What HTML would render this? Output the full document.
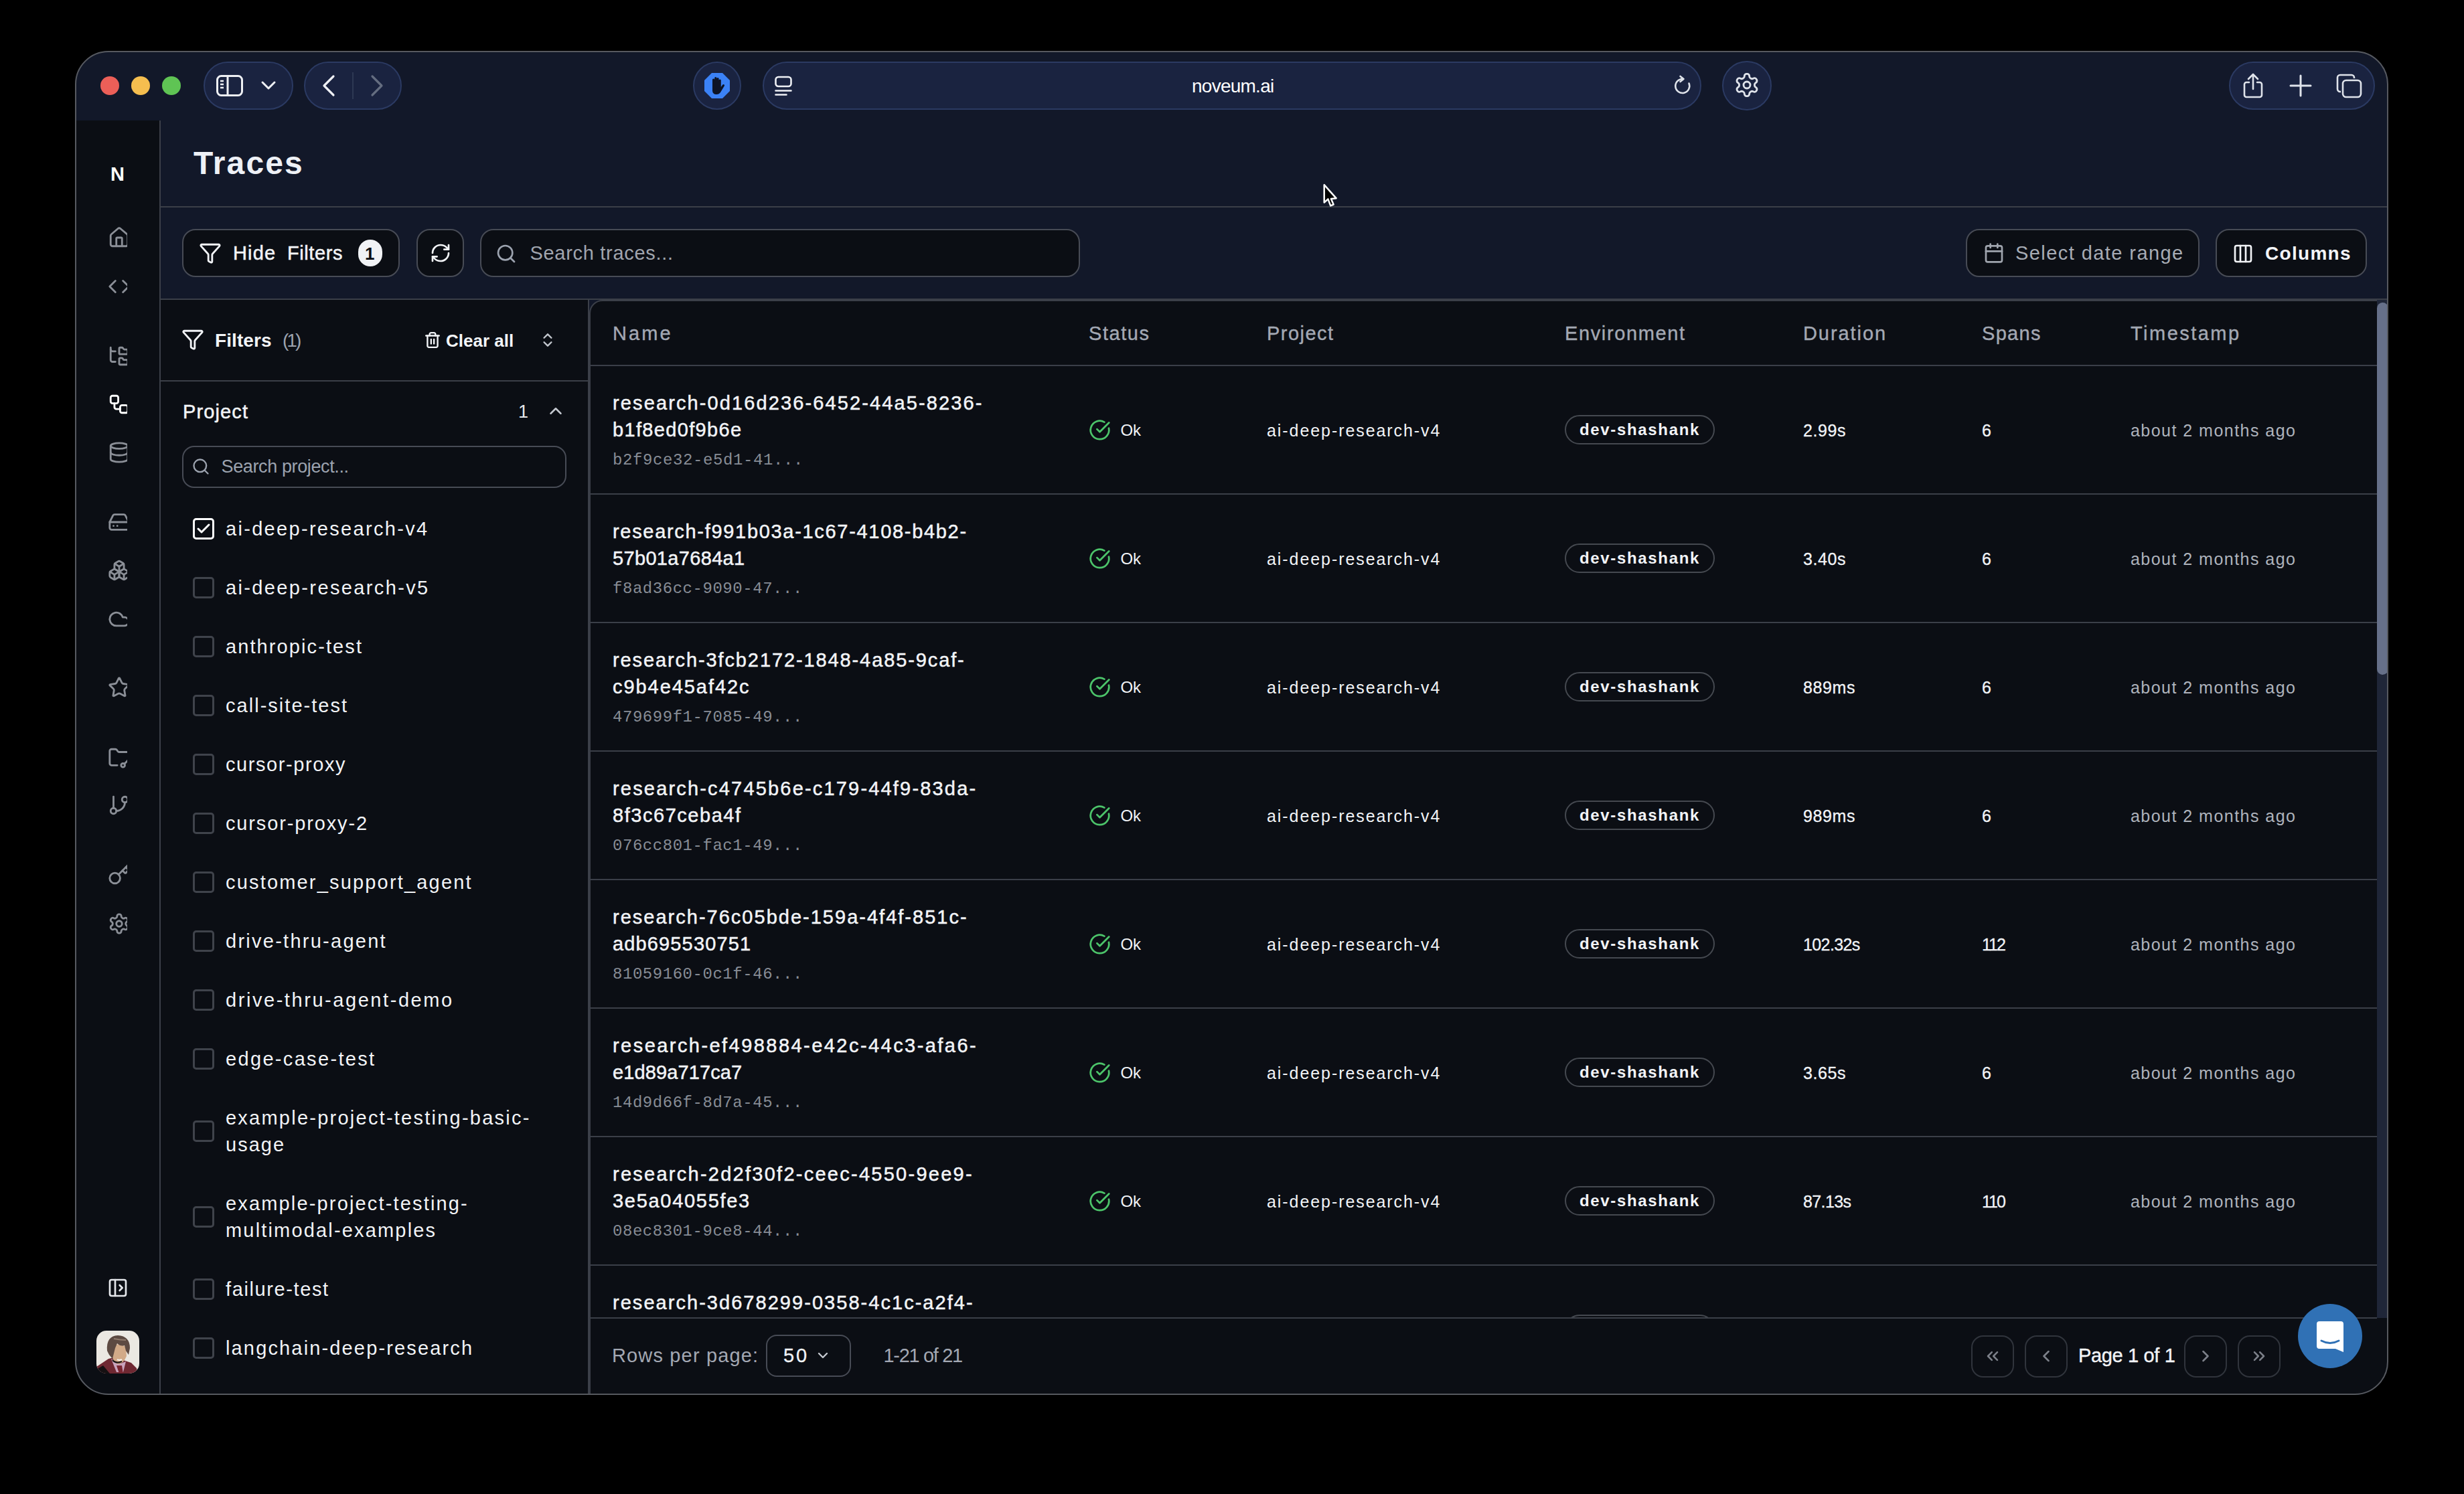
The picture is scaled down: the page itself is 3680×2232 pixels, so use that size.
<!DOCTYPE html>
<html><head><meta charset="utf-8">
<style>
*{box-sizing:border-box;margin:0;padding:0}
html,body{width:3680px;height:2232px;background:#000;overflow:hidden}
body{font-family:"Liberation Sans",sans-serif;color:#f2f4f7;position:relative}
.a{position:absolute}
#win{position:absolute;left:112px;top:76px;width:3455px;height:2008px;border-radius:50px;overflow:hidden;background:#121829}
#wb{position:absolute;left:112px;top:76px;width:3455px;height:2008px;border-radius:50px;border:2px solid #56595f;pointer-events:none}
#o{position:absolute;left:-112px;top:-76px;width:3680px;height:2232px}
.pill{position:absolute;background:#1a2340;border:2px solid #2b3a62;border-radius:40px}
.btn{position:absolute;background:#0b0e14;border:2px solid #474b55;border-radius:20px}
.t{position:absolute;white-space:nowrap;line-height:1}
.clip{position:absolute;overflow:hidden}
svg{position:absolute;overflow:visible}
</style></head><body>
<div id="win"><div id="o">

<div class="a" style="left:150px;top:114px;width:28px;height:28px;border-radius:50%;background:#ec5f58"></div>
<div class="a" style="left:196px;top:114px;width:28px;height:28px;border-radius:50%;background:#f5be4f"></div>
<div class="a" style="left:242px;top:114px;width:28px;height:28px;border-radius:50%;background:#5fc454"></div>
<div class="pill" style="left:304px;top:92px;width:134px;height:72px"></div>
<div class="pill" style="left:454px;top:92px;width:146px;height:72px"></div>
<div class="pill" style="left:1035px;top:92px;width:72px;height:72px;border-radius:50%"></div>
<div class="pill" style="left:1139px;top:92px;width:1402px;height:72px"></div>
<div class="pill" style="left:2572px;top:91px;width:74px;height:74px;border-radius:50%"></div>
<div class="pill" style="left:3329px;top:92px;width:218px;height:72px"></div>
<svg style="left:322px;top:111px" width="42" height="34" viewBox="0 0 42 34" fill="none" stroke="#eef0f4" stroke-width="3"><rect x="2.5" y="2.5" width="37" height="29" rx="6"/><path d="M18 3v28"/><path d="M7 10h5M7 15h5M7 20h5" stroke-width="2.5"/></svg>
<svg style="left:390px;top:121px" width="22" height="14" viewBox="0 0 22 14" fill="none" stroke="#eef0f4" stroke-width="3" stroke-linecap="round" stroke-linejoin="round"><path d="M2 2l9 9 9-9"/></svg>
<svg style="left:480px;top:112px" width="22" height="32" viewBox="0 0 22 32" fill="none" stroke="#eef0f4" stroke-width="3.2" stroke-linecap="round" stroke-linejoin="round"><path d="M18 2L4 16l14 14"/></svg>
<div class="a" style="left:526px;top:108px;width:2px;height:40px;background:#2d3853"></div>
<svg style="left:552px;top:112px" width="22" height="32" viewBox="0 0 22 32" fill="none" stroke="#646d80" stroke-width="3.2" stroke-linecap="round" stroke-linejoin="round"><path d="M4 2l14 14L4 30"/></svg>
<svg style="left:1052px;top:109px" width="38" height="38" viewBox="0 0 38 38"><polygon points="11,0 27,0 38,11 38,27 27,38 11,38 0,27 0,11" fill="#3b82f6"/><path d="M12 20 V10 a1.6 1.6 0 0 1 3.2 0 V18 V7.5 a1.6 1.6 0 0 1 3.2 0 V18 V8.5 a1.6 1.6 0 0 1 3.2 0 V18 V11 a1.6 1.6 0 0 1 3.2 0 V21 l2.5-3.5 a1.6 1.6 0 0 1 2.6 1.8 L24 29 a7 7 0 0 1-6 3 h-0.5 a5.5 5.5 0 0 1-5.5-5.5z" fill="#0d1426"/></svg>
<svg style="left:1156px;top:113px" width="28" height="32" viewBox="0 0 28 32" fill="none" stroke="#eef0f4" stroke-width="2.6" stroke-linecap="round"><rect x="2.5" y="2" width="23" height="14" rx="4"/><path d="M2.5 22.5h23M2.5 28.5h16"/></svg>
<div class="t" style="left:1780px;top:114.6px;font-size:28px;font-weight:normal;color:#ffffff;letter-spacing:-0.75px;font-family:'Liberation Sans';">noveum.ai</div>
<svg style="left:2499px;top:112px" width="30" height="32" viewBox="0 0 30 32" fill="none" stroke="#dfe3ea" stroke-width="2.6" stroke-linecap="round" stroke-linejoin="round"><path d="M23.5 12.5 A10.5 10.5 0 1 1 14.5 6"/><path d="M10.5 2l5 4-5 4"/></svg>
<svg style="left:2589.0px;top:107.0px" width="40" height="40" viewBox="0 0 24 24" fill="none" stroke="#dfe3ea" stroke-width="1.7" stroke-linecap="round" stroke-linejoin="round"><path d="M12.22 2h-.44a2 2 0 0 0-2 2v.18a2 2 0 0 1-1 1.73l-.43.25a2 2 0 0 1-2 0l-.15-.08a2 2 0 0 0-2.73.73l-.22.38a2 2 0 0 0 .73 2.73l.15.1a2 2 0 0 1 1 1.72v.51a2 2 0 0 1-1 1.74l-.15.09a2 2 0 0 0-.73 2.73l.22.38a2 2 0 0 0 2.73.73l.15-.08a2 2 0 0 1 2 0l.43.25a2 2 0 0 1 1 1.73V20a2 2 0 0 0 2 2h.44a2 2 0 0 0 2-2v-.18a2 2 0 0 1 1-1.73l.43-.25a2 2 0 0 1 2 0l.15.08a2 2 0 0 0 2.73-.73l.22-.39a2 2 0 0 0-.73-2.73l-.15-.08a2 2 0 0 1-1-1.74v-.5a2 2 0 0 1 1-1.74l.15-.09a2 2 0 0 0 .73-2.73l-.22-.38a2 2 0 0 0-2.73-.73l-.15.08a2 2 0 0 1-2 0l-.43-.25a2 2 0 0 1-1-1.73V4a2 2 0 0 0-2-2z"/><circle cx="12" cy="12" r="3"/></svg>
<svg style="left:3347px;top:108px" width="36" height="40" viewBox="0 0 36 40" fill="none" stroke="#dfe3ea" stroke-width="2.6" stroke-linecap="round" stroke-linejoin="round"><path d="M18 3v22M11 10l7-7 7 7"/><path d="M12 15H8a3 3 0 0 0-3 3v16a3 3 0 0 0 3 3h20a3 3 0 0 0 3-3V18a3 3 0 0 0-3-3h-4"/></svg>
<svg style="left:3419px;top:111px" width="34" height="34" viewBox="0 0 34 34" fill="none" stroke="#dfe3ea" stroke-width="3" stroke-linecap="round"><path d="M17 2v30M2 17h30"/></svg>
<svg style="left:3489px;top:110px" width="40" height="38" viewBox="0 0 40 38" fill="none" stroke="#dfe3ea" stroke-width="2.6" stroke-linejoin="round"><rect x="10" y="10" width="27" height="25" rx="5"/><path d="M7 27H6a4 4 0 0 1-4-4V6a4 4 0 0 1 4-4h17a4 4 0 0 1 4 4v1"/></svg>
<div class="a" style="left:112px;top:180px;width:128px;height:1910px;background:#0b0e14;border-right:2px solid #3b3f48"></div>
<div class="t" style="left:165px;top:246.1px;font-size:29px;font-weight:bold;color:#ffffff;letter-spacing:0.00px;font-family:'Liberation Sans';">N</div>
<div class="clip" style="left:113px;top:300px;width:77px;height:1150px">
<div class="a" style="left:-113px;top:-300px;width:400px;height:1500px">
<svg style="left:161.0px;top:338.0px" width="34" height="34" viewBox="0 0 24 24" fill="none" stroke="#8b8f97" stroke-width="2" stroke-linecap="round" stroke-linejoin="round"><path d="M15 21v-8a1 1 0 0 0-1-1h-4a1 1 0 0 0-1 1v8"/><path d="M3 10a2 2 0 0 1 .709-1.528l7-5.999a2 2 0 0 1 2.582 0l7 5.999A2 2 0 0 1 21 10v9a2 2 0 0 1-2 2H5a2 2 0 0 1-2-2z"/></svg>
<svg style="left:161.0px;top:411.0px" width="34" height="34" viewBox="0 0 24 24" fill="none" stroke="#8b8f97" stroke-width="2" stroke-linecap="round" stroke-linejoin="round"><path d="m16 18 6-6-6-6"/><path d="m8 6-6 6 6 6"/></svg>
<svg style="left:161.0px;top:515.0px" width="34" height="34" viewBox="0 0 24 24" fill="none" stroke="#8b8f97" stroke-width="2" stroke-linecap="round" stroke-linejoin="round"><path d="M20 10a1 1 0 0 0 1-1V6a1 1 0 0 0-1-1h-2.5a1 1 0 0 1-.8-.4l-.9-1.2A1 1 0 0 0 15 3h-2a1 1 0 0 0-1 1v5a1 1 0 0 0 1 1Z"/><path d="M20 21a1 1 0 0 0 1-1v-3a1 1 0 0 0-1-1h-2.9a1 1 0 0 1-.88-.55l-.42-.85a1 1 0 0 0-.92-.6H13a1 1 0 0 0-1 1v5a1 1 0 0 0 1 1Z"/><path d="M3 5a2 2 0 0 0 2 2h3"/><path d="M3 3v13a2 2 0 0 0 2 2h3"/></svg>
<svg style="left:161.0px;top:587.0px" width="34" height="34" viewBox="0 0 24 24" fill="none" stroke="#ffffff" stroke-width="2" stroke-linecap="round" stroke-linejoin="round"><rect width="8" height="8" x="3" y="3" rx="2"/><path d="M7 11v4a2 2 0 0 0 2 2h4"/><rect width="8" height="8" x="13" y="13" rx="2"/></svg>
<svg style="left:161.0px;top:658.5px" width="34" height="34" viewBox="0 0 24 24" fill="none" stroke="#8b8f97" stroke-width="2" stroke-linecap="round" stroke-linejoin="round"><ellipse cx="12" cy="5" rx="9" ry="3"/><path d="M3 5V19A9 3 0 0 0 21 19V5"/><path d="M3 12A9 3 0 0 0 21 12"/></svg>
<svg style="left:161.0px;top:763.0px" width="34" height="34" viewBox="0 0 24 24" fill="none" stroke="#8b8f97" stroke-width="2" stroke-linecap="round" stroke-linejoin="round"><line x1="22" x2="2" y1="12" y2="12"/><path d="M5.45 5.11 2 12v6a2 2 0 0 0 2 2h16a2 2 0 0 0 2-2v-6l-3.45-6.89A2 2 0 0 0 16.76 4H7.24a2 2 0 0 0-1.79 1.11z"/><line x1="6" x2="6.01" y1="16" y2="16"/><line x1="10" x2="10.01" y1="16" y2="16"/></svg>
<svg style="left:161.0px;top:834.5px" width="34" height="34" viewBox="0 0 24 24" fill="none" stroke="#8b8f97" stroke-width="2" stroke-linecap="round" stroke-linejoin="round"><path d="M2.97 12.92A2 2 0 0 0 2 14.63v3.24a2 2 0 0 0 .97 1.71l3 1.8a2 2 0 0 0 2.06 0L12 19v-5.5l-5-3-4.03 2.42Z"/><path d="m7 16.5-4.74-2.85"/><path d="m7 16.5 5-3"/><path d="M7 16.5v5.17"/><path d="M12 13.5V19l3.97 2.38a2 2 0 0 0 2.06 0l3-1.8a2 2 0 0 0 .97-1.71v-3.24a2 2 0 0 0-.97-1.71L17 10.5l-5 3Z"/><path d="m17 16.5-5-3"/><path d="m17 16.5 4.74-2.85"/><path d="M17 16.5v5.17"/><path d="M7.97 4.42A2 2 0 0 0 7 6.13v4.37l5 3 5-3V6.13a2 2 0 0 0-.97-1.71l-3-1.8a2 2 0 0 0-2.06 0l-3 1.8Z"/><path d="M12 8 7.26 5.15"/><path d="m12 8 4.74-2.85"/><path d="M12 13.5V8"/></svg>
<svg style="left:161.0px;top:908.0px" width="34" height="34" viewBox="0 0 24 24" fill="none" stroke="#8b8f97" stroke-width="2" stroke-linecap="round" stroke-linejoin="round"><path d="M17.5 19H9a7 7 0 1 1 6.71-9h1.79a4.5 4.5 0 1 1 0 9Z"/></svg>
<svg style="left:161.0px;top:1010.0px" width="34" height="34" viewBox="0 0 24 24" fill="none" stroke="#8b8f97" stroke-width="2" stroke-linecap="round" stroke-linejoin="round"><path d="M11.525 2.295a.53.53 0 0 1 .95 0l2.31 4.679a2.123 2.123 0 0 0 1.595 1.16l5.166.756a.53.53 0 0 1 .294.904l-3.736 3.638a2.123 2.123 0 0 0-.611 1.878l.882 5.14a.53.53 0 0 1-.771.56l-4.618-2.428a2.122 2.122 0 0 0-1.973 0L6.396 21.01a.53.53 0 0 1-.77-.56l.881-5.139a2.122 2.122 0 0 0-.611-1.879L2.16 9.795a.53.53 0 0 1 .294-.906l5.165-.755a2.122 2.122 0 0 0 1.597-1.16z"/></svg>
<svg style="left:161.0px;top:1115.0px" width="34" height="34" viewBox="0 0 24 24" fill="none" stroke="#8b8f97" stroke-width="2" stroke-linecap="round" stroke-linejoin="round"><circle cx="16" cy="20" r="2"/><path d="M10 20H4a2 2 0 0 1-2-2V5a2 2 0 0 1 2-2h3.9a2 2 0 0 1 1.69.9l.81 1.2a2 2 0 0 0 1.67.9H20a2 2 0 0 1 2 2v2"/><path d="m22 14-4.5 4.5"/><path d="m21 15 1 1"/></svg>
<svg style="left:161.0px;top:1186.0px" width="34" height="34" viewBox="0 0 24 24" fill="none" stroke="#8b8f97" stroke-width="2" stroke-linecap="round" stroke-linejoin="round"><line x1="6" x2="6" y1="3" y2="15"/><circle cx="18" cy="6" r="3"/><circle cx="6" cy="18" r="3"/><path d="M18 9a9 9 0 0 1-9 9"/></svg>
<svg style="left:161.0px;top:1290.0px" width="34" height="34" viewBox="0 0 24 24" fill="none" stroke="#8b8f97" stroke-width="2" stroke-linecap="round" stroke-linejoin="round"><path d="m15.5 7.5 2.3 2.3a1 1 0 0 0 1.4 0l2.1-2.1a1 1 0 0 0 0-1.4L19 4"/><path d="m21 2-9.6 9.6"/><circle cx="7.5" cy="15.5" r="5.5"/></svg>
<svg style="left:161.0px;top:1363.0px" width="34" height="34" viewBox="0 0 24 24" fill="none" stroke="#8b8f97" stroke-width="2" stroke-linecap="round" stroke-linejoin="round"><path d="M12.22 2h-.44a2 2 0 0 0-2 2v.18a2 2 0 0 1-1 1.73l-.43.25a2 2 0 0 1-2 0l-.15-.08a2 2 0 0 0-2.73.73l-.22.38a2 2 0 0 0 .73 2.73l.15.1a2 2 0 0 1 1 1.72v.51a2 2 0 0 1-1 1.74l-.15.09a2 2 0 0 0-.73 2.73l.22.38a2 2 0 0 0 2.73.73l.15-.08a2 2 0 0 1 2 0l.43.25a2 2 0 0 1 1 1.73V20a2 2 0 0 0 2 2h.44a2 2 0 0 0 2-2v-.18a2 2 0 0 1 1-1.73l.43-.25a2 2 0 0 1 2 0l.15.08a2 2 0 0 0 2.73-.73l.22-.39a2 2 0 0 0-.73-2.73l-.15-.08a2 2 0 0 1-1-1.74v-.5a2 2 0 0 1 1-1.74l.15-.09a2 2 0 0 0 .73-2.73l-.22-.38a2 2 0 0 0-2.73-.73l-.15.08a2 2 0 0 1-2 0l-.43-.25a2 2 0 0 1-1-1.73V4a2 2 0 0 0-2-2z"/><circle cx="12" cy="12" r="3"/></svg>
</div></div>
<svg style="left:160.0px;top:1908.0px" width="32" height="32" viewBox="0 0 24 24" fill="none" stroke="#e5e7eb" stroke-width="2" stroke-linecap="round" stroke-linejoin="round"><rect width="18" height="18" x="3" y="3" rx="2"/><path d="M9 3v18"/><path d="m14 9 3 3-3 3"/></svg>
<svg style="left:144px;top:1988px" width="64" height="64" viewBox="0 0 64 64"><defs><clipPath id="av"><rect width="64" height="64" rx="15"/></clipPath></defs><g clip-path="url(#av)"><rect width="64" height="64" fill="#ebe8e2"/><path d="M0 64 L0 54 L18 42 L26 40 L40 44 L52 48 L60 56 L62 64z" fill="#6f2832"/><path d="M0 64 L0 58 L10 52 L20 64z" fill="#151012"/><path d="M22 42 L30 62 L40 62 L44 46 L34 50z" fill="#c9a3bc"/><path d="M30 52 L34 64 L40 64 L38 52z" fill="#7a2632"/><path d="M24 22 Q34 18 44 24 L45 38 Q40 50 32 50 Q26 48 24 40z" fill="#d2aa88"/><path d="M24 44 Q30 50 38 46" stroke="#1a1414" stroke-width="2.2" fill="none"/><path d="M31 43 q4 2 7 0" stroke="#f5f0ea" stroke-width="2.4" fill="none"/><path d="M16 30 Q14 8 32 7 Q50 8 50 26 L48 36 L44 30 L42 22 Q36 24 31 19 L28 26 L26 34 L24 42 L19 36z" fill="#5d4a42"/><path d="M26 12 Q36 14 44 14" stroke="#8f7a6c" stroke-width="2" fill="none"/></g></svg>
<div class="t" style="left:289px;top:220.4px;font-size:48px;font-weight:bold;color:#eef1f6;letter-spacing:2.11px;font-family:'Liberation Sans';">Traces</div>
<div class="a" style="left:240px;top:308px;width:3328px;height:2px;background:#3b3f48"></div>
<div class="btn" style="left:272px;top:342px;width:325px;height:72px"></div>
<svg style="left:297.0px;top:361.0px" width="34" height="34" viewBox="0 0 24 24" fill="none" stroke="#f2f4f7" stroke-width="2" stroke-linecap="round" stroke-linejoin="round"><path d="M10 20a1 1 0 0 0 .553.895l2 1A1 1 0 0 0 14 21v-7a2 2 0 0 1 .517-1.341L21.74 4.67A1 1 0 0 0 21 3H3a1 1 0 0 0-.742 1.67l7.225 7.989A2 2 0 0 1 10 14z"/></svg>
<div class="t" style="left:348px;top:363.5px;font-size:29px;font-weight:normal;color:#f2f4f7;letter-spacing:1.16px;font-family:'Liberation Sans';-webkit-text-stroke:0.5px #f2f4f7;">Hide</div>
<div class="t" style="left:429px;top:363.5px;font-size:29px;font-weight:normal;color:#f2f4f7;letter-spacing:0.59px;font-family:'Liberation Sans';-webkit-text-stroke:0.5px #f2f4f7;">Filters</div>
<div class="a" style="left:535px;top:358px;width:36px;height:40px;border-radius:20px;background:#f1f3f6"></div>
<div class="t" style="left:545px;top:366.0px;font-size:26px;font-weight:bold;color:#0b0e14;letter-spacing:0.00px;font-family:'Liberation Sans';">1</div>
<div class="btn" style="left:622px;top:342px;width:71px;height:72px"></div>
<svg style="left:641.5px;top:362.0px" width="32" height="32" viewBox="0 0 24 24" fill="none" stroke="#f2f4f7" stroke-width="2" stroke-linecap="round" stroke-linejoin="round"><path d="M3 12a9 9 0 0 1 9-9 9.75 9.75 0 0 1 6.74 2.74L21 8"/><path d="M21 3v5h-5"/><path d="M21 12a9 9 0 0 1-9 9 9.75 9.75 0 0 1-6.74-2.74L3 16"/><path d="M8 16H3v5"/></svg>
<div class="btn" style="left:717px;top:342px;width:896px;height:72px"></div>
<svg style="left:740.0px;top:363.0px" width="32" height="32" viewBox="0 0 24 24" fill="none" stroke="#9ca3af" stroke-width="2" stroke-linecap="round" stroke-linejoin="round"><circle cx="11" cy="11" r="8"/><path d="m21 21-4.3-4.3"/></svg>
<div class="t" style="left:791.5px;top:363.5px;font-size:29px;font-weight:normal;color:#a0a5ae;letter-spacing:0.70px;font-family:'Liberation Sans';">Search traces...</div>
<div class="btn" style="left:2936px;top:342px;width:349px;height:72px"></div>
<svg style="left:2962.0px;top:362.0px" width="32" height="32" viewBox="0 0 24 24" fill="none" stroke="#a0a5ae" stroke-width="2" stroke-linecap="round" stroke-linejoin="round"><path d="M8 2v4"/><path d="M16 2v4"/><rect width="18" height="18" x="3" y="4" rx="2"/><path d="M3 10h18"/></svg>
<div class="t" style="left:3010px;top:364.1px;font-size:29px;font-weight:normal;color:#a7acb5;letter-spacing:1.43px;font-family:'Liberation Sans';">Select date range</div>
<div class="btn" style="left:3309px;top:342px;width:226px;height:72px"></div>
<svg style="left:3334.0px;top:362.5px" width="32" height="32" viewBox="0 0 24 24" fill="none" stroke="#f2f4f7" stroke-width="2" stroke-linecap="round" stroke-linejoin="round"><rect width="18" height="18" x="3" y="3" rx="2"/><path d="M9 3v18"/><path d="M15 3v18"/></svg>
<div class="t" style="left:3383px;top:364.9px;font-size:28px;font-weight:bold;color:#f2f4f7;letter-spacing:1.30px;font-family:'Liberation Sans';">Columns</div>
<div class="a" style="left:240px;top:446px;width:3328px;height:2px;background:#3b3f48"></div>
<div class="a" style="left:240px;top:448px;width:640px;height:1640px;background:#0b0e14;border-right:2px solid #3b3f48"></div>
<svg style="left:271.0px;top:490.0px" width="34" height="34" viewBox="0 0 24 24" fill="none" stroke="#f2f4f7" stroke-width="2" stroke-linecap="round" stroke-linejoin="round"><path d="M10 20a1 1 0 0 0 .553.895l2 1A1 1 0 0 0 14 21v-7a2 2 0 0 1 .517-1.341L21.74 4.67A1 1 0 0 0 21 3H3a1 1 0 0 0-.742 1.67l7.225 7.989A2 2 0 0 1 10 14z"/></svg>
<div class="t" style="left:321px;top:494.9px;font-size:28px;font-weight:bold;color:#f2f4f7;letter-spacing:0.09px;font-family:'Liberation Sans';">Filters</div>
<div class="t" style="left:422px;top:494.9px;font-size:28px;font-weight:normal;color:#9ca3af;letter-spacing:-2.95px;font-family:'Liberation Sans';">(1)</div>
<svg style="left:633.0px;top:495.0px" width="26" height="26" viewBox="0 0 24 24" fill="none" stroke="#f2f4f7" stroke-width="2.2" stroke-linecap="round" stroke-linejoin="round"><path d="M3 6h18"/><path d="M19 6v14c0 1-1 2-2 2H7c-1 0-2-1-2-2V6"/><path d="M8 6V4c0-1 1-2 2-2h4c1 0 2 1 2 2v2"/><line x1="10" x2="10" y1="11" y2="17"/><line x1="14" x2="14" y1="11" y2="17"/></svg>
<div class="t" style="left:666px;top:496.0px;font-size:26px;font-weight:bold;color:#f2f4f7;letter-spacing:0.01px;font-family:'Liberation Sans';">Clear all</div>
<svg style="left:804.5px;top:494.5px" width="26" height="26" viewBox="0 0 24 24" fill="none" stroke="#c4c8cf" stroke-width="2.2" stroke-linecap="round" stroke-linejoin="round"><path d="m7 15 5 5 5-5"/><path d="m7 9 5-5 5 5"/></svg>
<div class="a" style="left:240px;top:568px;width:638px;height:2px;background:#3b3f48"></div>
<div class="t" style="left:273px;top:600.5px;font-size:29px;font-weight:normal;color:#f2f4f7;letter-spacing:1.13px;font-family:'Liberation Sans';-webkit-text-stroke:0.5px #f2f4f7;">Project</div>
<div class="t" style="left:774px;top:602.1px;font-size:27px;font-weight:normal;color:#e5e7eb;letter-spacing:0.00px;font-family:'Liberation Sans';">1</div>
<svg style="left:815.0px;top:599.0px" width="30" height="30" viewBox="0 0 24 24" fill="none" stroke="#c4c8cf" stroke-width="2" stroke-linecap="round" stroke-linejoin="round"><path d="m18 15-6-6-6 6"/></svg>
<div class="a" style="left:272px;top:666px;width:574px;height:63px;border:2px solid #474b55;border-radius:18px"></div>
<svg style="left:286.0px;top:683.0px" width="28" height="28" viewBox="0 0 24 24" fill="none" stroke="#9ca3af" stroke-width="2" stroke-linecap="round" stroke-linejoin="round"><circle cx="11" cy="11" r="8"/><path d="m21 21-4.3-4.3"/></svg>
<div class="t" style="left:330.5px;top:684.1px;font-size:27px;font-weight:normal;color:#9ca3af;letter-spacing:-0.38px;font-family:'Liberation Sans';">Search project...</div>
<div class="a" style="left:288px;top:774px;width:32px;height:32px;border:3px solid #ffffff;border-radius:5px"></div>
<svg style="left:292.0px;top:778.0px" width="24" height="24" viewBox="0 0 24 24" fill="none" stroke="#ffffff" stroke-width="3" stroke-linecap="round" stroke-linejoin="round"><path d="M20 6 9 17l-5-5"/></svg>
<div class="t" style="left:337px;top:775.5px;font-size:29px;font-weight:normal;color:#f2f4f7;letter-spacing:2.31px;font-family:'Liberation Sans';">ai-deep-research-v4</div>
<div class="a" style="left:288px;top:862px;width:32px;height:32px;border:3px solid #3f434b;border-radius:5px"></div>
<div class="t" style="left:337px;top:863.5px;font-size:29px;font-weight:normal;color:#f2f4f7;letter-spacing:2.37px;font-family:'Liberation Sans';">ai-deep-research-v5</div>
<div class="a" style="left:288px;top:950px;width:32px;height:32px;border:3px solid #3f434b;border-radius:5px"></div>
<div class="t" style="left:337px;top:951.5px;font-size:29px;font-weight:normal;color:#f2f4f7;letter-spacing:2.10px;font-family:'Liberation Sans';">anthropic-test</div>
<div class="a" style="left:288px;top:1038px;width:32px;height:32px;border:3px solid #3f434b;border-radius:5px"></div>
<div class="t" style="left:337px;top:1039.5px;font-size:29px;font-weight:normal;color:#f2f4f7;letter-spacing:2.03px;font-family:'Liberation Sans';">call-site-test</div>
<div class="a" style="left:288px;top:1126px;width:32px;height:32px;border:3px solid #3f434b;border-radius:5px"></div>
<div class="t" style="left:337px;top:1127.5px;font-size:29px;font-weight:normal;color:#f2f4f7;letter-spacing:1.58px;font-family:'Liberation Sans';">cursor-proxy</div>
<div class="a" style="left:288px;top:1214px;width:32px;height:32px;border:3px solid #3f434b;border-radius:5px"></div>
<div class="t" style="left:337px;top:1215.5px;font-size:29px;font-weight:normal;color:#f2f4f7;letter-spacing:1.86px;font-family:'Liberation Sans';">cursor-proxy-2</div>
<div class="a" style="left:288px;top:1302px;width:32px;height:32px;border:3px solid #3f434b;border-radius:5px"></div>
<div class="t" style="left:337px;top:1303.5px;font-size:29px;font-weight:normal;color:#f2f4f7;letter-spacing:2.18px;font-family:'Liberation Sans';">customer_support_agent</div>
<div class="a" style="left:288px;top:1390px;width:32px;height:32px;border:3px solid #3f434b;border-radius:5px"></div>
<div class="t" style="left:337px;top:1391.5px;font-size:29px;font-weight:normal;color:#f2f4f7;letter-spacing:2.26px;font-family:'Liberation Sans';">drive-thru-agent</div>
<div class="a" style="left:288px;top:1478px;width:32px;height:32px;border:3px solid #3f434b;border-radius:5px"></div>
<div class="t" style="left:337px;top:1479.5px;font-size:29px;font-weight:normal;color:#f2f4f7;letter-spacing:2.56px;font-family:'Liberation Sans';">drive-thru-agent-demo</div>
<div class="a" style="left:288px;top:1566px;width:32px;height:32px;border:3px solid #3f434b;border-radius:5px"></div>
<div class="t" style="left:337px;top:1567.5px;font-size:29px;font-weight:normal;color:#f2f4f7;letter-spacing:2.33px;font-family:'Liberation Sans';">edge-case-test</div>
<div class="a" style="left:288px;top:1674px;width:32px;height:32px;border:3px solid #3f434b;border-radius:5px"></div>
<div class="t" style="left:337px;top:1655.5px;font-size:29px;font-weight:normal;color:#f2f4f7;letter-spacing:2.24px;font-family:'Liberation Sans';">example-project-testing-basic-</div>
<div class="t" style="left:337px;top:1695.5px;font-size:29px;font-weight:normal;color:#f2f4f7;letter-spacing:2.03px;font-family:'Liberation Sans';">usage</div>
<div class="a" style="left:288px;top:1802px;width:32px;height:32px;border:3px solid #3f434b;border-radius:5px"></div>
<div class="t" style="left:337px;top:1783.5px;font-size:29px;font-weight:normal;color:#f2f4f7;letter-spacing:2.16px;font-family:'Liberation Sans';">example-project-testing-</div>
<div class="t" style="left:337px;top:1823.5px;font-size:29px;font-weight:normal;color:#f2f4f7;letter-spacing:2.17px;font-family:'Liberation Sans';">multimodal-examples</div>
<div class="a" style="left:288px;top:1910px;width:32px;height:32px;border:3px solid #3f434b;border-radius:5px"></div>
<div class="t" style="left:337px;top:1911.5px;font-size:29px;font-weight:normal;color:#f2f4f7;letter-spacing:1.61px;font-family:'Liberation Sans';">failure-test</div>
<div class="a" style="left:288px;top:1998px;width:32px;height:32px;border:3px solid #3f434b;border-radius:5px"></div>
<div class="t" style="left:337px;top:1999.5px;font-size:29px;font-weight:normal;color:#f2f4f7;letter-spacing:2.15px;font-family:'Liberation Sans';">langchain-deep-research</div>
<div class="a" style="left:880px;top:448px;width:2700px;height:1650px;background:#0b0e14;border:2px solid #3b3f48;border-radius:20px 0 0 0"></div>
<div class="t" style="left:915px;top:483.8px;font-size:29px;font-weight:normal;color:#a3a8b3;letter-spacing:3.12px;font-family:'Liberation Sans';-webkit-text-stroke:0.4px #a3a8b3;">Name</div>
<div class="t" style="left:1626px;top:483.8px;font-size:29px;font-weight:normal;color:#a3a8b3;letter-spacing:1.56px;font-family:'Liberation Sans';-webkit-text-stroke:0.4px #a3a8b3;">Status</div>
<div class="t" style="left:1892px;top:483.8px;font-size:29px;font-weight:normal;color:#a3a8b3;letter-spacing:1.47px;font-family:'Liberation Sans';-webkit-text-stroke:0.4px #a3a8b3;">Project</div>
<div class="t" style="left:2337px;top:483.8px;font-size:29px;font-weight:normal;color:#a3a8b3;letter-spacing:1.63px;font-family:'Liberation Sans';-webkit-text-stroke:0.4px #a3a8b3;">Environment</div>
<div class="t" style="left:2693px;top:483.8px;font-size:29px;font-weight:normal;color:#a3a8b3;letter-spacing:1.93px;font-family:'Liberation Sans';-webkit-text-stroke:0.4px #a3a8b3;">Duration</div>
<div class="t" style="left:2960px;top:483.8px;font-size:29px;font-weight:normal;color:#a3a8b3;letter-spacing:1.32px;font-family:'Liberation Sans';-webkit-text-stroke:0.4px #a3a8b3;">Spans</div>
<div class="t" style="left:3182px;top:483.8px;font-size:29px;font-weight:normal;color:#a3a8b3;letter-spacing:2.47px;font-family:'Liberation Sans';-webkit-text-stroke:0.4px #a3a8b3;">Timestamp</div>
<div class="a" style="left:882px;top:545px;width:2668px;height:2px;background:#3b3f48"></div>
<div class="clip" style="left:882px;top:547px;width:2668px;height:1422px">
<div class="a" style="left:-882px;top:-547px;width:3680px;height:2232px">
<div class="t" style="left:915px;top:587.5px;font-size:29px;font-weight:normal;color:#f2f4f7;letter-spacing:2.12px;font-family:'Liberation Sans';-webkit-text-stroke:0.5px #f2f4f7;">research-0d16d236-6452-44a5-8236-</div>
<div class="t" style="left:915px;top:627.5px;font-size:29px;font-weight:normal;color:#f2f4f7;letter-spacing:1.34px;font-family:'Liberation Sans';-webkit-text-stroke:0.5px #f2f4f7;">b1f8ed0f9b6e</div>
<div class="t" style="left:915px;top:675.6px;font-size:24px;font-weight:normal;color:#878c95;letter-spacing:0.60px;font-family:'Liberation Mono';">b2f9ce32-e5d1-41...</div>
<svg style="left:1625.5px;top:625.5px" width="33" height="33" viewBox="0 0 24 24" fill="none" stroke="#4cc46a" stroke-width="2" stroke-linecap="round" stroke-linejoin="round"><path d="M21.801 10A10 10 0 1 1 17 3.335"/><path d="m9 11 3 3L22 4"/></svg>
<div class="t" style="left:1673.5px;top:630.7px;font-size:24px;font-weight:normal;color:#f2f4f7;letter-spacing:-0.17px;font-family:'Liberation Sans';">Ok</div>
<div class="t" style="left:1892px;top:630.8px;font-size:25px;font-weight:normal;color:#f2f4f7;letter-spacing:1.93px;font-family:'Liberation Sans';">ai-deep-research-v4</div>
<div class="t" style="left:2693px;top:630.8px;font-size:25px;font-weight:normal;color:#f2f4f7;letter-spacing:0.60px;font-family:'Liberation Sans';-webkit-text-stroke:0.3px #f2f4f7;">2.99s</div>
<div class="t" style="left:2960px;top:630.8px;font-size:25px;font-weight:normal;color:#f2f4f7;letter-spacing:-2.00px;font-family:'Liberation Sans';-webkit-text-stroke:0.3px #f2f4f7;">6</div>
<div class="t" style="left:3182px;top:630.8px;font-size:25px;font-weight:normal;color:#aeb3bc;letter-spacing:1.47px;font-family:'Liberation Sans';">about 2 months ago</div>
<div class="a" style="left:2337px;top:620px;width:224px;height:44px;border:2px solid #454950;border-radius:22px"></div>
<div class="t" style="left:2359px;top:630.2px;font-size:24px;font-weight:bold;color:#f2f4f7;letter-spacing:1.66px;font-family:'Liberation Sans';">dev-shashank</div>
<div class="a" style="left:882px;top:737px;width:2668px;height:2px;background:#3b3f48"></div>
<div class="t" style="left:915px;top:779.5px;font-size:29px;font-weight:normal;color:#f2f4f7;letter-spacing:1.69px;font-family:'Liberation Sans';-webkit-text-stroke:0.5px #f2f4f7;">research-f991b03a-1c67-4108-b4b2-</div>
<div class="t" style="left:915px;top:819.5px;font-size:29px;font-weight:normal;color:#f2f4f7;letter-spacing:0.33px;font-family:'Liberation Sans';-webkit-text-stroke:0.5px #f2f4f7;">57b01a7684a1</div>
<div class="t" style="left:915px;top:867.6px;font-size:24px;font-weight:normal;color:#878c95;letter-spacing:0.54px;font-family:'Liberation Mono';">f8ad36cc-9090-47...</div>
<svg style="left:1625.5px;top:817.5px" width="33" height="33" viewBox="0 0 24 24" fill="none" stroke="#4cc46a" stroke-width="2" stroke-linecap="round" stroke-linejoin="round"><path d="M21.801 10A10 10 0 1 1 17 3.335"/><path d="m9 11 3 3L22 4"/></svg>
<div class="t" style="left:1673.5px;top:822.7px;font-size:24px;font-weight:normal;color:#f2f4f7;letter-spacing:-0.17px;font-family:'Liberation Sans';">Ok</div>
<div class="t" style="left:1892px;top:822.8px;font-size:25px;font-weight:normal;color:#f2f4f7;letter-spacing:1.93px;font-family:'Liberation Sans';">ai-deep-research-v4</div>
<div class="t" style="left:2693px;top:822.8px;font-size:25px;font-weight:normal;color:#f2f4f7;letter-spacing:0.60px;font-family:'Liberation Sans';-webkit-text-stroke:0.3px #f2f4f7;">3.40s</div>
<div class="t" style="left:2960px;top:822.8px;font-size:25px;font-weight:normal;color:#f2f4f7;letter-spacing:-2.00px;font-family:'Liberation Sans';-webkit-text-stroke:0.3px #f2f4f7;">6</div>
<div class="t" style="left:3182px;top:822.8px;font-size:25px;font-weight:normal;color:#aeb3bc;letter-spacing:1.47px;font-family:'Liberation Sans';">about 2 months ago</div>
<div class="a" style="left:2337px;top:812px;width:224px;height:44px;border:2px solid #454950;border-radius:22px"></div>
<div class="t" style="left:2359px;top:822.2px;font-size:24px;font-weight:bold;color:#f2f4f7;letter-spacing:1.66px;font-family:'Liberation Sans';">dev-shashank</div>
<div class="a" style="left:882px;top:929px;width:2668px;height:2px;background:#3b3f48"></div>
<div class="t" style="left:915px;top:971.5px;font-size:29px;font-weight:normal;color:#f2f4f7;letter-spacing:1.89px;font-family:'Liberation Sans';-webkit-text-stroke:0.5px #f2f4f7;">research-3fcb2172-1848-4a85-9caf-</div>
<div class="t" style="left:915px;top:1011.5px;font-size:29px;font-weight:normal;color:#f2f4f7;letter-spacing:1.94px;font-family:'Liberation Sans';-webkit-text-stroke:0.5px #f2f4f7;">c9b4e45af42c</div>
<div class="t" style="left:915px;top:1059.6px;font-size:24px;font-weight:normal;color:#878c95;letter-spacing:0.54px;font-family:'Liberation Mono';">479699f1-7085-49...</div>
<svg style="left:1625.5px;top:1009.5px" width="33" height="33" viewBox="0 0 24 24" fill="none" stroke="#4cc46a" stroke-width="2" stroke-linecap="round" stroke-linejoin="round"><path d="M21.801 10A10 10 0 1 1 17 3.335"/><path d="m9 11 3 3L22 4"/></svg>
<div class="t" style="left:1673.5px;top:1014.7px;font-size:24px;font-weight:normal;color:#f2f4f7;letter-spacing:-0.17px;font-family:'Liberation Sans';">Ok</div>
<div class="t" style="left:1892px;top:1014.8px;font-size:25px;font-weight:normal;color:#f2f4f7;letter-spacing:1.93px;font-family:'Liberation Sans';">ai-deep-research-v4</div>
<div class="t" style="left:2693px;top:1014.8px;font-size:25px;font-weight:normal;color:#f2f4f7;letter-spacing:0.60px;font-family:'Liberation Sans';-webkit-text-stroke:0.3px #f2f4f7;">889ms</div>
<div class="t" style="left:2960px;top:1014.8px;font-size:25px;font-weight:normal;color:#f2f4f7;letter-spacing:-2.00px;font-family:'Liberation Sans';-webkit-text-stroke:0.3px #f2f4f7;">6</div>
<div class="t" style="left:3182px;top:1014.8px;font-size:25px;font-weight:normal;color:#aeb3bc;letter-spacing:1.47px;font-family:'Liberation Sans';">about 2 months ago</div>
<div class="a" style="left:2337px;top:1004px;width:224px;height:44px;border:2px solid #454950;border-radius:22px"></div>
<div class="t" style="left:2359px;top:1014.2px;font-size:24px;font-weight:bold;color:#f2f4f7;letter-spacing:1.66px;font-family:'Liberation Sans';">dev-shashank</div>
<div class="a" style="left:882px;top:1121px;width:2668px;height:2px;background:#3b3f48"></div>
<div class="t" style="left:915px;top:1163.5px;font-size:29px;font-weight:normal;color:#f2f4f7;letter-spacing:2.18px;font-family:'Liberation Sans';-webkit-text-stroke:0.5px #f2f4f7;">research-c4745b6e-c179-44f9-83da-</div>
<div class="t" style="left:915px;top:1203.5px;font-size:29px;font-weight:normal;color:#f2f4f7;letter-spacing:1.54px;font-family:'Liberation Sans';-webkit-text-stroke:0.5px #f2f4f7;">8f3c67ceba4f</div>
<div class="t" style="left:915px;top:1251.6px;font-size:24px;font-weight:normal;color:#878c95;letter-spacing:0.54px;font-family:'Liberation Mono';">076cc801-fac1-49...</div>
<svg style="left:1625.5px;top:1201.5px" width="33" height="33" viewBox="0 0 24 24" fill="none" stroke="#4cc46a" stroke-width="2" stroke-linecap="round" stroke-linejoin="round"><path d="M21.801 10A10 10 0 1 1 17 3.335"/><path d="m9 11 3 3L22 4"/></svg>
<div class="t" style="left:1673.5px;top:1206.7px;font-size:24px;font-weight:normal;color:#f2f4f7;letter-spacing:-0.17px;font-family:'Liberation Sans';">Ok</div>
<div class="t" style="left:1892px;top:1206.8px;font-size:25px;font-weight:normal;color:#f2f4f7;letter-spacing:1.93px;font-family:'Liberation Sans';">ai-deep-research-v4</div>
<div class="t" style="left:2693px;top:1206.8px;font-size:25px;font-weight:normal;color:#f2f4f7;letter-spacing:0.60px;font-family:'Liberation Sans';-webkit-text-stroke:0.3px #f2f4f7;">989ms</div>
<div class="t" style="left:2960px;top:1206.8px;font-size:25px;font-weight:normal;color:#f2f4f7;letter-spacing:-2.00px;font-family:'Liberation Sans';-webkit-text-stroke:0.3px #f2f4f7;">6</div>
<div class="t" style="left:3182px;top:1206.8px;font-size:25px;font-weight:normal;color:#aeb3bc;letter-spacing:1.47px;font-family:'Liberation Sans';">about 2 months ago</div>
<div class="a" style="left:2337px;top:1196px;width:224px;height:44px;border:2px solid #454950;border-radius:22px"></div>
<div class="t" style="left:2359px;top:1206.2px;font-size:24px;font-weight:bold;color:#f2f4f7;letter-spacing:1.66px;font-family:'Liberation Sans';">dev-shashank</div>
<div class="a" style="left:882px;top:1313px;width:2668px;height:2px;background:#3b3f48"></div>
<div class="t" style="left:915px;top:1355.5px;font-size:29px;font-weight:normal;color:#f2f4f7;letter-spacing:2.01px;font-family:'Liberation Sans';-webkit-text-stroke:0.5px #f2f4f7;">research-76c05bde-159a-4f4f-851c-</div>
<div class="t" style="left:915px;top:1395.5px;font-size:29px;font-weight:normal;color:#f2f4f7;letter-spacing:1.14px;font-family:'Liberation Sans';-webkit-text-stroke:0.5px #f2f4f7;">adb695530751</div>
<div class="t" style="left:915px;top:1443.6px;font-size:24px;font-weight:normal;color:#878c95;letter-spacing:0.54px;font-family:'Liberation Mono';">81059160-0c1f-46...</div>
<svg style="left:1625.5px;top:1393.5px" width="33" height="33" viewBox="0 0 24 24" fill="none" stroke="#4cc46a" stroke-width="2" stroke-linecap="round" stroke-linejoin="round"><path d="M21.801 10A10 10 0 1 1 17 3.335"/><path d="m9 11 3 3L22 4"/></svg>
<div class="t" style="left:1673.5px;top:1398.7px;font-size:24px;font-weight:normal;color:#f2f4f7;letter-spacing:-0.17px;font-family:'Liberation Sans';">Ok</div>
<div class="t" style="left:1892px;top:1398.8px;font-size:25px;font-weight:normal;color:#f2f4f7;letter-spacing:1.93px;font-family:'Liberation Sans';">ai-deep-research-v4</div>
<div class="t" style="left:2693px;top:1398.8px;font-size:25px;font-weight:normal;color:#f2f4f7;letter-spacing:-0.60px;font-family:'Liberation Sans';-webkit-text-stroke:0.3px #f2f4f7;">102.32s</div>
<div class="t" style="left:2960px;top:1398.8px;font-size:25px;font-weight:normal;color:#f2f4f7;letter-spacing:-2.00px;font-family:'Liberation Sans';-webkit-text-stroke:0.3px #f2f4f7;">112</div>
<div class="t" style="left:3182px;top:1398.8px;font-size:25px;font-weight:normal;color:#aeb3bc;letter-spacing:1.47px;font-family:'Liberation Sans';">about 2 months ago</div>
<div class="a" style="left:2337px;top:1388px;width:224px;height:44px;border:2px solid #454950;border-radius:22px"></div>
<div class="t" style="left:2359px;top:1398.2px;font-size:24px;font-weight:bold;color:#f2f4f7;letter-spacing:1.66px;font-family:'Liberation Sans';">dev-shashank</div>
<div class="a" style="left:882px;top:1505px;width:2668px;height:2px;background:#3b3f48"></div>
<div class="t" style="left:915px;top:1547.5px;font-size:29px;font-weight:normal;color:#f2f4f7;letter-spacing:2.45px;font-family:'Liberation Sans';-webkit-text-stroke:0.5px #f2f4f7;">research-ef498884-e42c-44c3-afa6-</div>
<div class="t" style="left:915px;top:1587.5px;font-size:29px;font-weight:normal;color:#f2f4f7;letter-spacing:0.11px;font-family:'Liberation Sans';-webkit-text-stroke:0.5px #f2f4f7;">e1d89a717ca7</div>
<div class="t" style="left:915px;top:1635.6px;font-size:24px;font-weight:normal;color:#878c95;letter-spacing:0.54px;font-family:'Liberation Mono';">14d9d66f-8d7a-45...</div>
<svg style="left:1625.5px;top:1585.5px" width="33" height="33" viewBox="0 0 24 24" fill="none" stroke="#4cc46a" stroke-width="2" stroke-linecap="round" stroke-linejoin="round"><path d="M21.801 10A10 10 0 1 1 17 3.335"/><path d="m9 11 3 3L22 4"/></svg>
<div class="t" style="left:1673.5px;top:1590.7px;font-size:24px;font-weight:normal;color:#f2f4f7;letter-spacing:-0.17px;font-family:'Liberation Sans';">Ok</div>
<div class="t" style="left:1892px;top:1590.8px;font-size:25px;font-weight:normal;color:#f2f4f7;letter-spacing:1.93px;font-family:'Liberation Sans';">ai-deep-research-v4</div>
<div class="t" style="left:2693px;top:1590.8px;font-size:25px;font-weight:normal;color:#f2f4f7;letter-spacing:0.60px;font-family:'Liberation Sans';-webkit-text-stroke:0.3px #f2f4f7;">3.65s</div>
<div class="t" style="left:2960px;top:1590.8px;font-size:25px;font-weight:normal;color:#f2f4f7;letter-spacing:-2.00px;font-family:'Liberation Sans';-webkit-text-stroke:0.3px #f2f4f7;">6</div>
<div class="t" style="left:3182px;top:1590.8px;font-size:25px;font-weight:normal;color:#aeb3bc;letter-spacing:1.47px;font-family:'Liberation Sans';">about 2 months ago</div>
<div class="a" style="left:2337px;top:1580px;width:224px;height:44px;border:2px solid #454950;border-radius:22px"></div>
<div class="t" style="left:2359px;top:1590.2px;font-size:24px;font-weight:bold;color:#f2f4f7;letter-spacing:1.66px;font-family:'Liberation Sans';">dev-shashank</div>
<div class="a" style="left:882px;top:1697px;width:2668px;height:2px;background:#3b3f48"></div>
<div class="t" style="left:915px;top:1739.5px;font-size:29px;font-weight:normal;color:#f2f4f7;letter-spacing:2.26px;font-family:'Liberation Sans';-webkit-text-stroke:0.5px #f2f4f7;">research-2d2f30f2-ceec-4550-9ee9-</div>
<div class="t" style="left:915px;top:1779.5px;font-size:29px;font-weight:normal;color:#f2f4f7;letter-spacing:1.70px;font-family:'Liberation Sans';-webkit-text-stroke:0.5px #f2f4f7;">3e5a04055fe3</div>
<div class="t" style="left:915px;top:1827.6px;font-size:24px;font-weight:normal;color:#878c95;letter-spacing:0.54px;font-family:'Liberation Mono';">08ec8301-9ce8-44...</div>
<svg style="left:1625.5px;top:1777.5px" width="33" height="33" viewBox="0 0 24 24" fill="none" stroke="#4cc46a" stroke-width="2" stroke-linecap="round" stroke-linejoin="round"><path d="M21.801 10A10 10 0 1 1 17 3.335"/><path d="m9 11 3 3L22 4"/></svg>
<div class="t" style="left:1673.5px;top:1782.7px;font-size:24px;font-weight:normal;color:#f2f4f7;letter-spacing:-0.17px;font-family:'Liberation Sans';">Ok</div>
<div class="t" style="left:1892px;top:1782.8px;font-size:25px;font-weight:normal;color:#f2f4f7;letter-spacing:1.93px;font-family:'Liberation Sans';">ai-deep-research-v4</div>
<div class="t" style="left:2693px;top:1782.8px;font-size:25px;font-weight:normal;color:#f2f4f7;letter-spacing:-0.60px;font-family:'Liberation Sans';-webkit-text-stroke:0.3px #f2f4f7;">87.13s</div>
<div class="t" style="left:2960px;top:1782.8px;font-size:25px;font-weight:normal;color:#f2f4f7;letter-spacing:-2.00px;font-family:'Liberation Sans';-webkit-text-stroke:0.3px #f2f4f7;">110</div>
<div class="t" style="left:3182px;top:1782.8px;font-size:25px;font-weight:normal;color:#aeb3bc;letter-spacing:1.47px;font-family:'Liberation Sans';">about 2 months ago</div>
<div class="a" style="left:2337px;top:1772px;width:224px;height:44px;border:2px solid #454950;border-radius:22px"></div>
<div class="t" style="left:2359px;top:1782.2px;font-size:24px;font-weight:bold;color:#f2f4f7;letter-spacing:1.66px;font-family:'Liberation Sans';">dev-shashank</div>
<div class="a" style="left:882px;top:1889px;width:2668px;height:2px;background:#3b3f48"></div>
<div class="t" style="left:915px;top:1931.5px;font-size:29px;font-weight:normal;color:#f2f4f7;letter-spacing:2.04px;font-family:'Liberation Sans';-webkit-text-stroke:0.5px #f2f4f7;">research-3d678299-0358-4c1c-a2f4-</div>
<div class="a" style="left:2337px;top:1964px;width:224px;height:44px;border:2px solid #454950;border-radius:22px"></div>
</div></div>
<div class="a" style="left:3550px;top:448px;width:17px;height:1521px;background:#1f2638"></div>
<div class="a" style="left:3550px;top:452px;width:17px;height:556px;background:#667089;border-radius:9px"></div>
<div class="a" style="left:882px;top:1968px;width:2668px;height:2px;background:#3b3f48"></div>
<div class="t" style="left:914px;top:2011.1px;font-size:29px;font-weight:normal;color:#a3a8b3;letter-spacing:1.15px;font-family:'Liberation Sans';">Rows per page:</div>
<div class="a" style="left:1144px;top:1994px;width:127px;height:63px;border:2px solid #474b55;border-radius:16px"></div>
<div class="t" style="left:1170px;top:2011.1px;font-size:29px;font-weight:normal;color:#f2f4f7;letter-spacing:2.87px;font-family:'Liberation Sans';-webkit-text-stroke:0.3px #f2f4f7;">50</div>
<svg style="left:1217.0px;top:2013.0px" width="24" height="24" viewBox="0 0 24 24" fill="none" stroke="#c4c8cf" stroke-width="2.4" stroke-linecap="round" stroke-linejoin="round"><path d="m6 9 6 6 6-6"/></svg>
<div class="t" style="left:1319.5px;top:2011.1px;font-size:29px;font-weight:normal;color:#a3a8b3;letter-spacing:-1.33px;font-family:'Liberation Sans';">1-21 of 21</div>
<div class="a" style="left:2944px;top:1995px;width:64px;height:63px;border:2px solid #30343c;border-radius:18px"></div>
<svg style="left:2962.0px;top:2012.0px" width="28" height="28" viewBox="0 0 24 24" fill="none" stroke="#7c8089" stroke-width="2.2" stroke-linecap="round" stroke-linejoin="round"><path d="m11 17-5-5 5-5"/><path d="m18 17-5-5 5-5"/></svg>
<div class="a" style="left:3024px;top:1995px;width:64px;height:63px;border:2px solid #30343c;border-radius:18px"></div>
<svg style="left:3042.0px;top:2012.0px" width="28" height="28" viewBox="0 0 24 24" fill="none" stroke="#7c8089" stroke-width="2.2" stroke-linecap="round" stroke-linejoin="round"><path d="m15 18-6-6 6-6"/></svg>
<div class="a" style="left:3262px;top:1995px;width:64px;height:63px;border:2px solid #30343c;border-radius:18px"></div>
<svg style="left:3280.0px;top:2012.0px" width="28" height="28" viewBox="0 0 24 24" fill="none" stroke="#7c8089" stroke-width="2.2" stroke-linecap="round" stroke-linejoin="round"><path d="m9 18 6-6-6-6"/></svg>
<div class="a" style="left:3342px;top:1995px;width:64px;height:63px;border:2px solid #30343c;border-radius:18px"></div>
<svg style="left:3360.0px;top:2012.0px" width="28" height="28" viewBox="0 0 24 24" fill="none" stroke="#7c8089" stroke-width="2.2" stroke-linecap="round" stroke-linejoin="round"><path d="m6 17 5-5-5-5"/><path d="m13 17 5-5-5-5"/></svg>
<div class="t" style="left:3104px;top:2011.4px;font-size:29px;font-weight:normal;color:#f2f4f7;letter-spacing:-0.35px;font-family:'Liberation Sans';-webkit-text-stroke:0.4px #f2f4f7;">Page 1 of 1</div>
<div class="a" style="left:3432px;top:1948px;width:96px;height:96px;border-radius:50%;background:#3071b5"></div>
<svg style="left:3458px;top:1972px" width="44" height="48" viewBox="0 0 44 48"><path d="M6 2h32a4 4 0 0 1 4 4v42l-12-5H6a4 4 0 0 1-4-4V6a4 4 0 0 1 4-4z" fill="#fff"/><path d="M9 31 q13 7 26 0" fill="none" stroke="#3071b5" stroke-width="3" stroke-linecap="round"/></svg>
<svg style="left:1976.4px;top:274.4px" width="24" height="38" viewBox="0 0 24 38"><path d="M1.7 2.2 L1.7 28.6 L7.4 23.4 L11.2 33.4 L15.6 31.6 L12 22.9 L19.6 22.2 Z" fill="#000" stroke="#fff" stroke-width="2.5" stroke-linejoin="round"/></svg>

</div></div>
<div id="wb"></div>
</body></html>
